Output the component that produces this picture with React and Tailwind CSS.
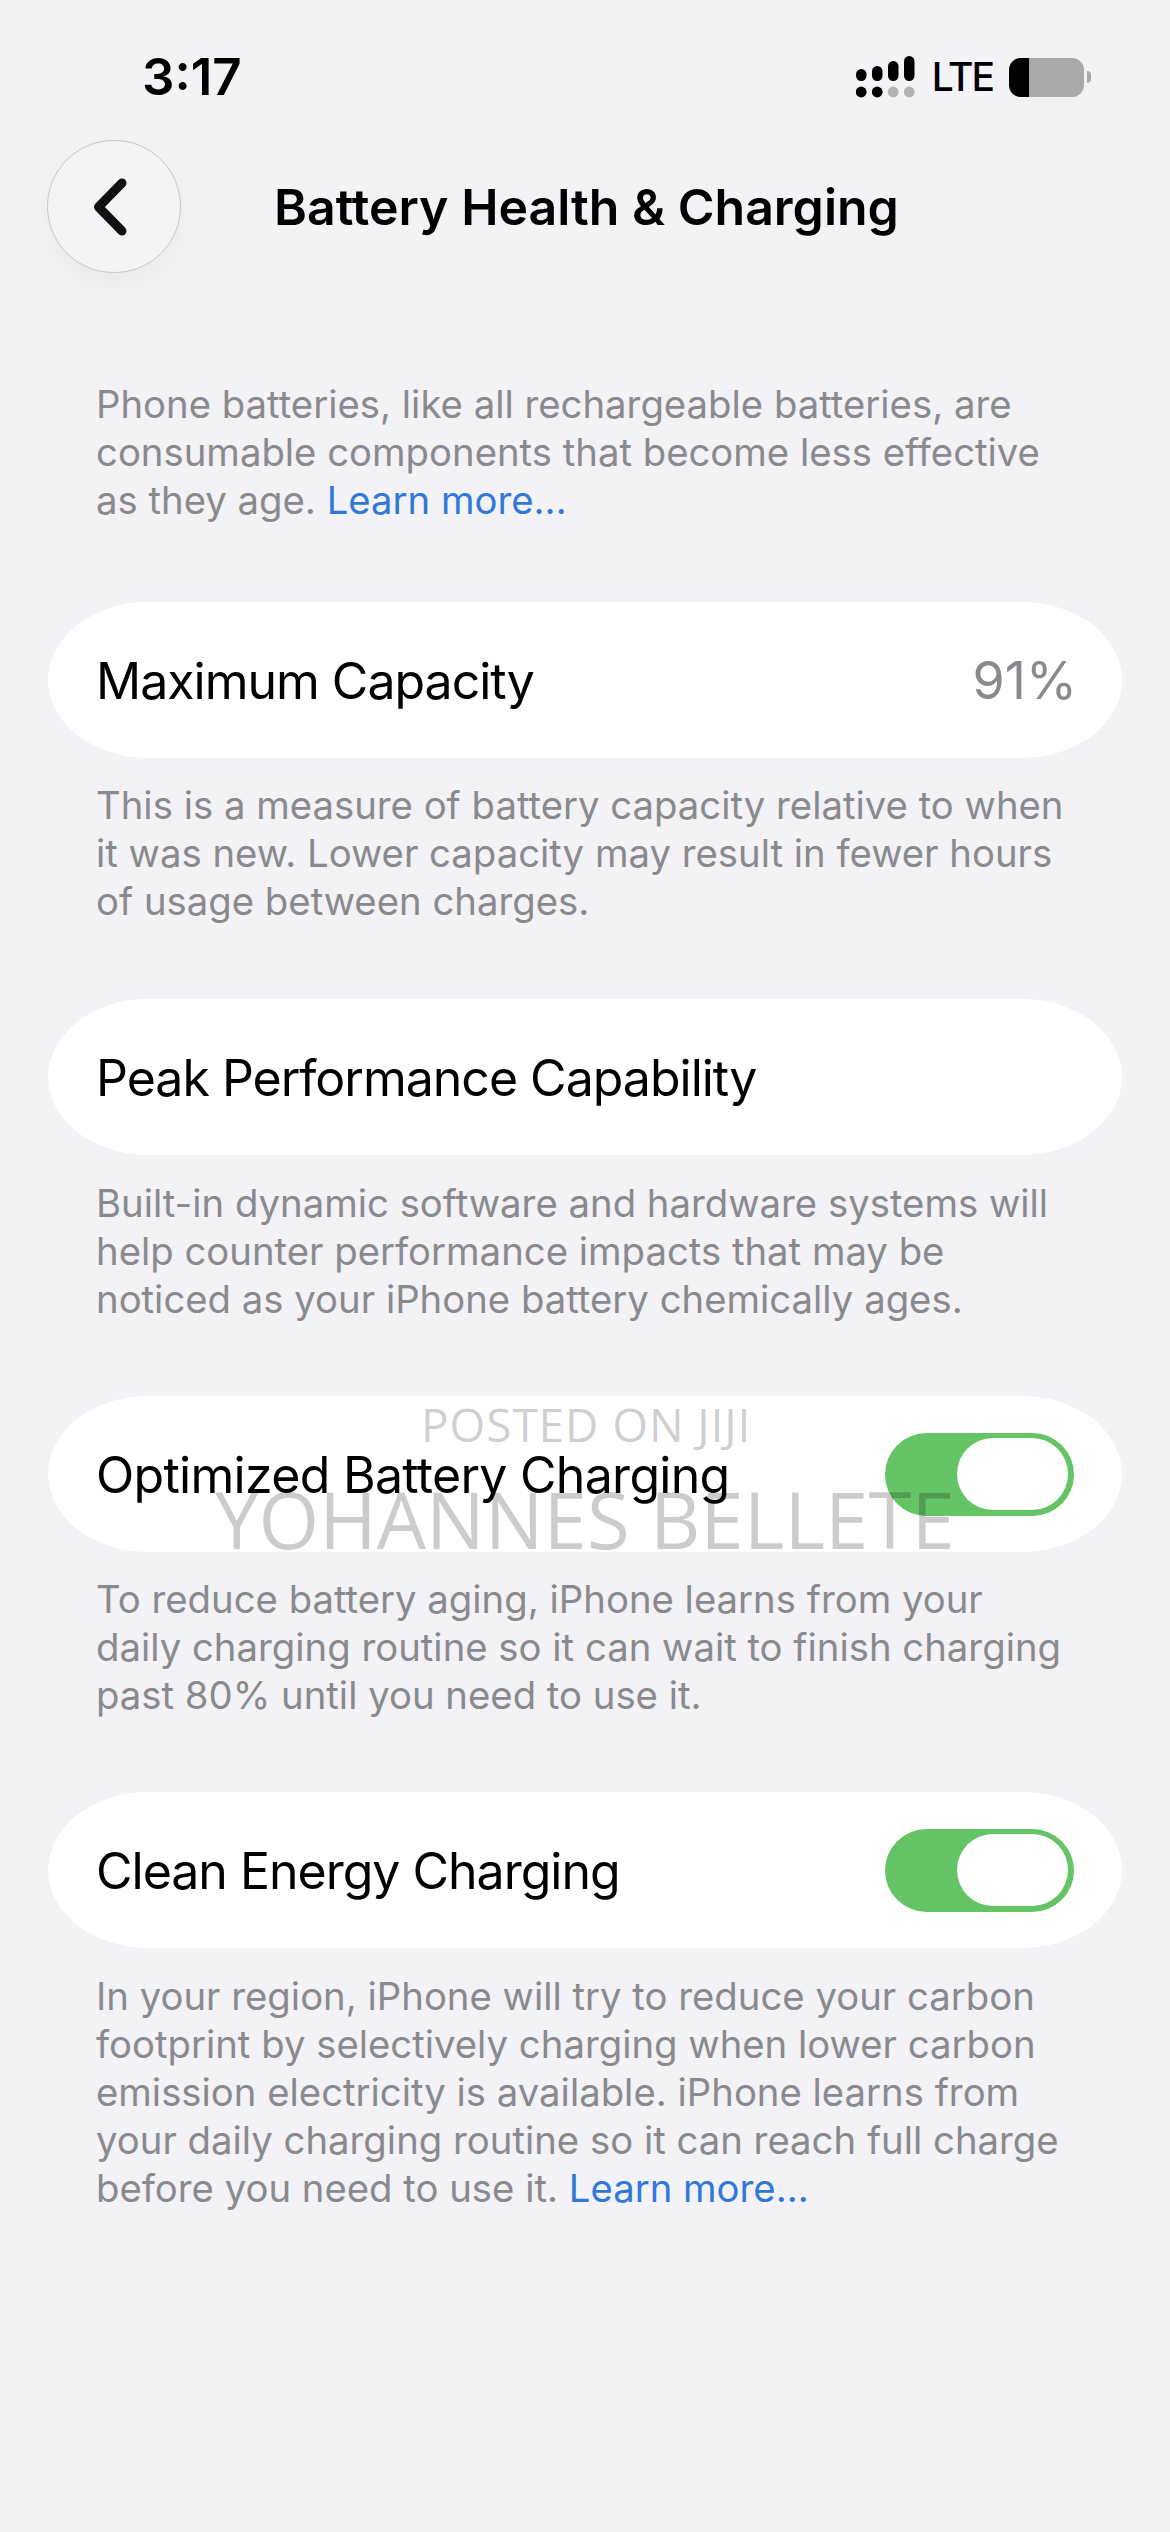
function SignalIcon() {
    return (
        <svg width="60" height="42" viewBox="0 0 60 42" className="block">
            <rect x="0" y="13" width="10.5" height="12" rx="5.2" fill="#000" />
            <rect x="16" y="10" width="10.5" height="15" rx="5.2" fill="#000" />
            <rect x="32" y="5" width="10.5" height="20" rx="5.2" fill="#000" />
            <rect x="48" y="0" width="10.5" height="25" rx="5.2" fill="#000" />
            <circle cx="5.2" cy="36" r="5.4" fill="#000" />
            <circle cx="21.2" cy="36" r="5.4" fill="#000" />
            <circle cx="37.2" cy="36" r="5.4" fill="#b3b3b6" />
            <circle cx="53.2" cy="36" r="5.4" fill="#b3b3b6" />
        </svg>
    );
}

function BackIcon() {
    return (
        <svg width="34" height="58" viewBox="0 0 34 58" className="block -ml-[9px]" fill="none">
            <path d="M29 5 L5.5 29 L29 53" stroke="#111" strokeWidth="9" strokeLinecap="round" strokeLinejoin="round" />
        </svg>
    );
}

function StatusBar() {
    return (
        <div className="flex items-center h-[54px] mt-[50px] pl-[142px] pr-[79px] justify-between">
            <span className="text-[51px] leading-[54px] font-semibold text-black">3:17</span>
            <div className="flex items-center">
                <SignalIcon />
                <span className="ml-[16px] text-[39px] leading-[54px] font-medium text-black tracking-[-2px]">LTE</span>
                <div className="ml-[16px] flex items-center">
                    <div className="w-[75px] h-[39px] rounded-[12px] overflow-hidden bg-[#a9a8ac]">
                        <div className="w-[20px] h-full bg-black" />
                    </div>
                    <div className="ml-[3px] w-[4px] h-[12px] rounded-r-full bg-[#a9a8ac]" />
                </div>
            </div>
        </div>
    );
}

function Note({ className, lines }) {
    return (
        <p className={`pl-[96px] text-[38.3px] leading-[48px] text-[#8a8a8e] whitespace-nowrap ${className}`}>
            {lines.map((line, i) => (
                <span key={i} className="block">{line}</span>
            ))}
        </p>
    );
}

function Learn() {
    return <span className="text-[#3178d9]">Learn more...</span>;
}

function Toggle() {
    return (
        <div className="w-[189px] h-[83px] rounded-full bg-[#65c466] flex items-center justify-end pr-[6px]">
            <div className="w-[111px] h-[72px] rounded-full bg-white" />
        </div>
    );
}

function Card({ className, label, tracking = "tracking-[-1px]", children }) {
    return (
        <div className={`mx-[48px] h-[156px] bg-white rounded-[100px/78px] flex items-center justify-between pl-[48px] pr-[48px] ${className}`}>
            <span className={`pt-[2px] text-[50px] text-black leading-[60px] ${tracking}`}>{label}</span>
            {children}
        </div>
    );
}

export default function App() {
    return (
        <div className="relative w-[1170px] h-[2532px] overflow-hidden bg-[#f2f2f7] font-['Inter',sans-serif]">
            <div className="pt-px -mt-px">
                <StatusBar />

                <div className="mt-[36px] h-[133px] pl-[47px] flex items-center">
                    <button className="w-[134px] h-[133px] rounded-full border border-[#c8c8cc] bg-[#f4f4f8] shadow-[0_16px_30px_rgba(0,0,0,0.04)] flex items-center justify-center">
                        <BackIcon />
                    </button>
                    <h1 className="ml-[93px] text-[50px] leading-[60px] font-semibold text-black whitespace-nowrap">
                        Battery Health &amp; Charging
                    </h1>
                </div>

                <Note
                    className="mt-[107px]"
                    lines={[
                        "Phone batteries, like all rechargeable batteries, are",
                        "consumable components that become less effective",
                        <>as they age. <Learn /></>,
                    ]}
                />

                <Card className="mt-[78px]" label="Maximum Capacity">
                    <span className="pt-[2px] -mr-[3px] text-[52px] leading-[60px] text-[#8a8a8e]">91%</span>
                </Card>
                <Note
                    className="mt-[23px]"
                    lines={[
                        "This is a measure of battery capacity relative to when",
                        "it was new. Lower capacity may result in fewer hours",
                        "of usage between charges.",
                    ]}
                />

                <Card className="mt-[74px]" label="Peak Performance Capability" />
                <Note
                    className="mt-[24px]"
                    lines={[
                        "Built-in dynamic software and hardware systems will",
                        "help counter performance impacts that may be",
                        "noticed as your iPhone battery chemically ages.",
                    ]}
                />

                <Card className="mt-[73px]" label="Optimized Battery Charging" tracking="tracking-[-0.7px]">
                    <Toggle />
                </Card>
                <Note
                    className="mt-[23px]"
                    lines={[
                        "To reduce battery aging, iPhone learns from your",
                        "daily charging routine so it can wait to finish charging",
                        "past 80% until you need to use it.",
                    ]}
                />

                <Card className="mt-[73px]" label="Clean Energy Charging">
                    <Toggle />
                </Card>
                <Note
                    className="mt-[24px]"
                    lines={[
                        "In your region, iPhone will try to reduce your carbon",
                        "footprint by selectively charging when lower carbon",
                        "emission electricity is available. iPhone learns from",
                        "your daily charging routine so it can reach full charge",
                        <>before you need to use it. <Learn /></>,
                    ]}
                />
            </div>

            {/* watermark */}
            <div className="absolute left-[421px] top-[1396px] text-[46px] leading-[56px] tracking-[0.9px] text-black/20 whitespace-nowrap font-['Open_Sans',sans-serif]">
                POSTED ON JIJI
            </div>
            <div className="absolute left-[215px] top-[1466px] text-[78px] leading-[106px] text-black/20 whitespace-nowrap font-['Open_Sans',sans-serif]">
                YOHANNES BELLETE
            </div>
        </div>
    );
}
